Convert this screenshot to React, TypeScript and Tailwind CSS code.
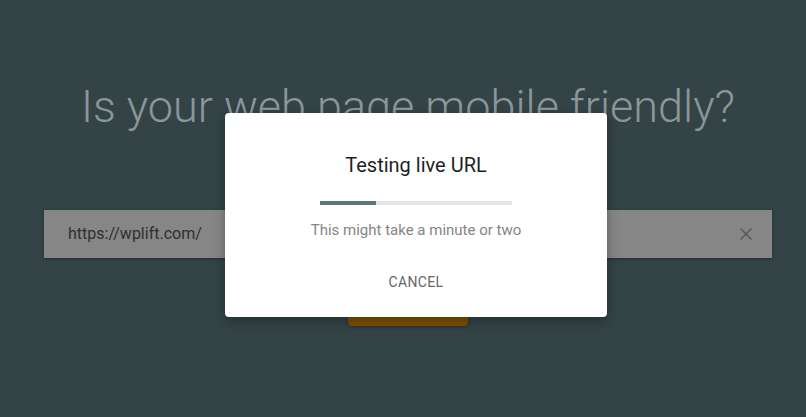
import { X } from "lucide-react";

const font = { fontFamily: "Roboto, 'Noto Sans', sans-serif" };

export default function App() {
  return (
    <div
      className="relative h-[417px] w-full overflow-hidden bg-[#334346]"
      style={font}
    >
      <div className="flex flex-col items-center">
        <h1 className="pt-[79px] pl-[10px] text-[45px] leading-[55px] font-light text-[#8b9699]">
          Is your web page mobile friendly?
        </h1>

        <div className="mt-[76px] ml-[10px] flex h-12 w-[728px] items-center justify-between bg-[#868686] pl-6 pr-4 shadow-[0_1px_3px_rgba(0,0,0,0.35)]">
          <span className="text-base text-[#2c3031]">https://wplift.com/</span>
          <X className="h-5 w-5 text-[#555a5b]" strokeWidth={2} />
        </div>

        <div className="mt-8 ml-[10px] h-9 w-[120px] rounded-sm bg-[#7a4f03] shadow-[0_1px_3px_rgba(0,0,0,0.35)]" />
      </div>

      <div className="absolute top-[113px] left-[225px] flex h-[204px] w-[382px] flex-col items-center rounded-sm bg-white pt-[38px] shadow-[0_4px_12px_rgba(0,0,0,0.3)]">
        <h2 className="text-xl leading-7 font-normal text-[#1f1f1f]">
          Testing live URL
        </h2>
        <div className="mt-[22px] h-1 w-48 bg-[#e4e4e4]">
          <div className="h-1 w-14 bg-[#5f757a]" />
        </div>
        <p className="mt-[15px] text-[15px] leading-5 text-[#858585]">
          This might take a minute or two
        </p>
        <button className="mt-8 text-sm leading-5 font-normal tracking-wide text-[#666666]">
          CANCEL
        </button>
      </div>
    </div>
  );
}
